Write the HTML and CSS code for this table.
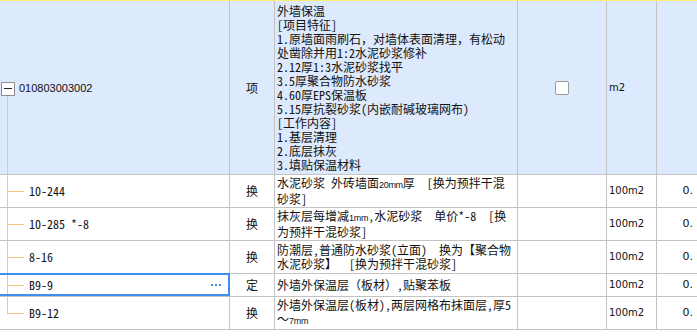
FILE: index.html
```html
<!DOCTYPE html>
<html lang="zh">
<head>
<meta charset="utf-8">
<link rel="stylesheet" href="styles.css">
</head>
<body>
<div class="grid">
  <div class="row row-main">
    <div class="cell c-code">
      <span class="toggle"><span class="minus"></span></span>
      <span class="code-main">010803003002</span>
      <span class="trunk"></span>
    </div>
    <div class="cell c-type">项</div>
    <div class="cell c-desc"><div class="txt">外墙保温<br>[项目特征]<br>1.原墙面雨刷石，对墙体表面清理，有松动<br>处凿除并用1:2水泥砂浆修补<br>2.12厚1:3水泥砂浆找平<br>3.5厚聚合物防水砂浆<br>4.60厚EPS保温板<br>5.15厚抗裂砂浆(内嵌耐碱玻璃网布)<br>[工作内容]<br>1.基层清理<br>2.底层抹灰<br>3.填贴保温材料</div></div>
    <div class="cell c-check"><span class="checkbox"></span></div>
    <div class="cell c-unit">m2</div>
    <div class="cell c-qty"></div>
  </div>
  <div class="row row-sub">
    <div class="cell c-code"><span class="branch"></span><span class="code">10-244</span></div>
    <div class="cell c-type">换</div>
    <div class="cell c-desc"><div class="txt">水泥砂浆 外砖墙面<span class="small">20mm</span>厚&nbsp;&nbsp;[换为预拌干混<br>砂浆]</div></div>
    <div class="cell c-check"></div>
    <div class="cell c-unit">100m2</div>
    <div class="cell c-qty">0.</div>
  </div>
  <div class="row row-sub">
    <div class="cell c-code"><span class="branch"></span><span class="code">10-285 *-8</span></div>
    <div class="cell c-type">换</div>
    <div class="cell c-desc"><div class="txt">抹灰层每增减<span class="small">1mm</span>,水泥砂浆&nbsp;&nbsp;单价*-8&nbsp;&nbsp;[换<br>为预拌干混砂浆]</div></div>
    <div class="cell c-check"></div>
    <div class="cell c-unit">100m2</div>
    <div class="cell c-qty">0.</div>
  </div>
  <div class="row row-sub">
    <div class="cell c-code"><span class="branch"></span><span class="code">8-16</span></div>
    <div class="cell c-type">换</div>
    <div class="cell c-desc"><div class="txt">防潮层,普通防水砂浆(立面)&nbsp;&nbsp;换为【聚合物<br>水泥砂浆】&nbsp;&nbsp;[换为预拌干混砂浆]</div></div>
    <div class="cell c-check"></div>
    <div class="cell c-unit">100m2</div>
    <div class="cell c-qty">0.</div>
  </div>
  <div class="row row-single">
    <div class="cell c-code selected"><span class="branch"></span><span class="code">B9-9</span>
      <svg class="more" width="10" height="3" viewBox="0 0 10 3"><rect x="0" y="0" width="2" height="2" fill="#3a8ee6"/><rect x="4" y="0" width="2" height="2" fill="#3a8ee6"/><rect x="8" y="0" width="2" height="2" fill="#3a8ee6"/></svg>
    </div>
    <div class="cell c-type">定</div>
    <div class="cell c-desc"><div class="txt">外墙外保温层（板材）,贴聚苯板</div></div>
    <div class="cell c-check"></div>
    <div class="cell c-unit">100m2</div>
    <div class="cell c-qty">0.</div>
  </div>
  <div class="row row-sub">
    <div class="cell c-code"><span class="branch last"></span><span class="code">B9-12</span></div>
    <div class="cell c-type">换</div>
    <div class="cell c-desc"><div class="txt">外墙外保温层(板材),两层网格布抹面层,厚5<br>～<span class="small">7mm</span></div></div>
    <div class="cell c-check"></div>
    <div class="cell c-unit">100m2</div>
    <div class="cell c-qty">0.</div>
  </div>
</div>
</body>
</html>
```

FILE: styles.css
```css
html, body {
  margin: 0;
  padding: 0;
  background: #ffffff;
  overflow: hidden;
}

body {
  font-family: "Noto Sans Mono CJK SC", "Liberation Mono", "Noto Sans CJK SC", monospace;
  font-size: 12px;
  color: #111111;
}

.grid {
  width: 697px;
  border-top: 1px solid #f8ec7a;
}

.row {
  display: flex;
  border-bottom: 1px solid #c3c3c3;
}

.row-main {
  height: 173px;
  background: #dde9fc;
}

.row-sub {
  height: 32px;
}

.row-single {
  height: 22px;
}

.cell {
  box-sizing: border-box;
  border-right: 1px solid #c3c3c3;
  display: flex;
  align-items: center;
  line-height: 14px;
  overflow: hidden;
  white-space: nowrap;
}

.c-code { width: 230px; position: relative; overflow: visible; }
.c-type { width: 45px; justify-content: center; }
.c-desc { width: 243px; padding-left: 2px; }
.c-check { width: 89px; justify-content: center; }
.c-unit {
  width: 50px;
  padding-left: 2px;
  font-family: "DejaVu Sans", "Liberation Sans", sans-serif;
  font-size: 10px;
}
.c-qty {
  flex: 1;
  border-right: none;
  justify-content: flex-end;
  padding-right: 4px;
  font-family: "DejaVu Sans", "Liberation Sans", sans-serif;
  font-size: 11px;
}

.txt {
  line-height: 14px;
}

.small {
  font-family: "Liberation Sans", "DejaVu Sans", sans-serif;
  font-size: 9px;
  letter-spacing: -0.3px;
}

/* tree */
.toggle {
  box-sizing: border-box;
  width: 14px;
  height: 14px;
  margin-left: 1px;
  margin-top: 2px;
  border: 1px solid #8e8e8e;
  background: #ffffff;
  display: flex;
  align-items: center;
  justify-content: center;
  position: relative;
  z-index: 1;
}

.minus {
  width: 8px;
  height: 1px;
  background: #222222;
}

.code-main {
  margin-left: 4px;
  font-family: "Liberation Sans", "DejaVu Sans", sans-serif;
  font-size: 11px;
}

.trunk {
  position: absolute;
  left: 7px;
  top: 50%;
  bottom: 0;
  width: 1px;
  background: #fbc67a;
}

.branch {
  align-self: stretch;
  width: 29px;
  flex: none;
  position: relative;
}

.branch::before {
  content: "";
  position: absolute;
  left: 7px;
  top: 0;
  bottom: 0;
  width: 1px;
  background: #fbc67a;
}

.branch.last::before {
  bottom: 50%;
}

.branch::after {
  content: "";
  position: absolute;
  left: 7px;
  top: 50%;
  width: 17px;
  height: 1px;
  background: #fbc67a;
}

.code {
  flex: 1;
}

.selected::after {
  content: "";
  position: absolute;
  left: -3px;
  right: -1px;
  top: -1px;
  bottom: 0;
  border: 2px solid #3e8ff0;
  pointer-events: none;
}

.more {
  margin-right: 8px;
  margin-top: 1px;
}

.checkbox {
  box-sizing: border-box;
  width: 14px;
  height: 14px;
  border: 1px solid #9a9a9a;
  border-radius: 2px;
  background: #ffffff;
}
```
